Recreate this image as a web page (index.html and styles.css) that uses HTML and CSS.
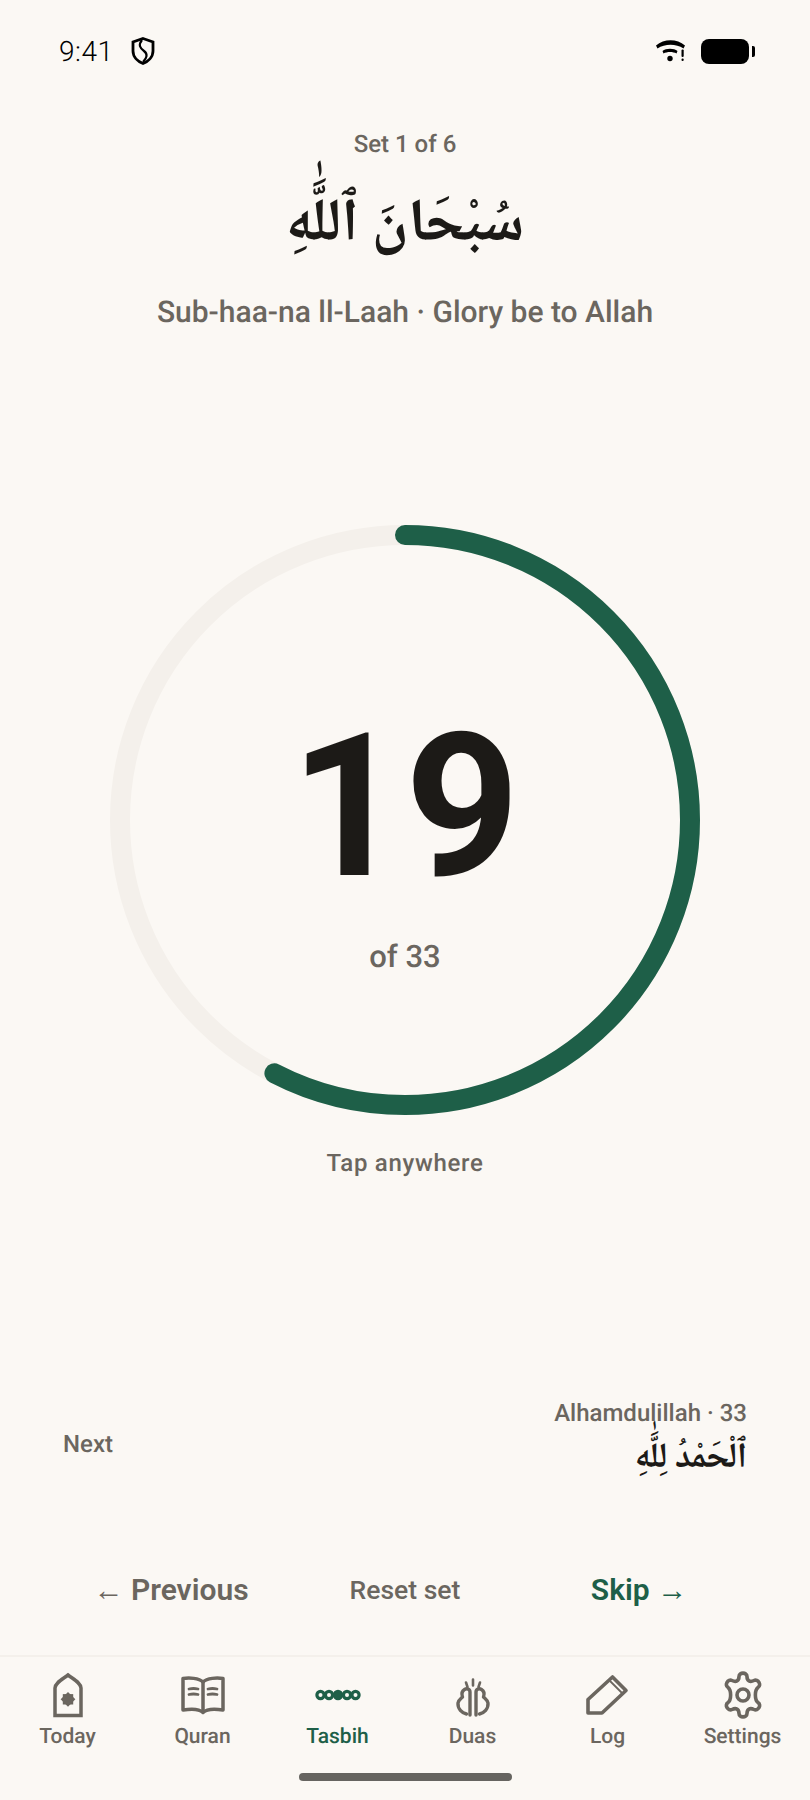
FILE: index.html
```html
<!DOCTYPE html>
<html lang="en">
<head>
    <meta charset="UTF-8">
    <meta name="viewport" content="width=device-width, initial-scale=1.0">
    <title>Tasbih</title>
    <link rel="stylesheet" href="styles.css">
</head>
<body>
    <div class="screen">
        <div class="status-bar">
            <div class="status-left">
                <span class="status-time">9:41</span>
                <svg class="status-shield" width="24" height="28" viewBox="0 0 24 28" fill="none" stroke="#000" stroke-width="2.800">
                    <path d="M12 1.500 L22 5 V14 C22 20 17 24.500 12 26.500 C7 24.500 2 20 2 14 V5 Z"/>
                    <path d="M11 3 C7 8 9 11 13 14 C17 17 16 21 12 25" stroke-width="2.200"/>
                </svg>
            </div>
            <div class="status-right">
                <svg width="30" height="22" viewBox="0 0 30 22" fill="#000">
                    <path d="M0 5.500 C8 -1.500 21 -1.500 29 5.500 L27.500 8.500 C20 3.500 9 3.500 1.500 8.500 Z"/>
                    <path d="M6.500 11 C10 8 18 8 21.500 11 L20.500 13.500 C17 11.500 11 11.500 7.500 13.500 Z"/>
                    <circle cx="14" cy="18.500" r="2.700"/>
                    <rect x="25.500" y="9.500" width="2.200" height="7.500" rx="1"/>
                    <rect x="25.500" y="18.500" width="2.200" height="2.600" rx="1"/>
                </svg>
                <div class="battery"></div>
                <div class="battery-nub"></div>
            </div>
        </div>

        <div class="dhikr-head">
            <p class="set-label">Set 1 of 6</p>
            <h1 class="arabic-main" lang="ar" dir="rtl">سُبْحَانَ ٱللَّٰهِ</h1>
            <p class="translit">Sub-haa-na ll-Laah · Glory be to Allah</p>
        </div>

        <div class="counter">
            <svg class="counter-ring" width="590" height="590" viewBox="0 0 590 590" fill="none">
                <circle cx="295" cy="295" r="285" stroke="#f4f0eb" stroke-width="20"/>
                <!-- 19 of 33 beads, starting from twelve o'clock -->
                <circle cx="295" cy="295" r="285" stroke="#1e5f48" stroke-width="20" stroke-linecap="round"
                    pathLength="33" stroke-dasharray="19 33" transform="rotate(-90 295 295)"/>
            </svg>
            <div class="counter-text">
                <div class="count">19</div>
                <div class="count-of">of 33</div>
            </div>
        </div>

        <p class="tap-hint">Tap anywhere</p>

        <div class="next-row">
            <span class="next-label">Next</span>
            <div class="next-info">
                <span class="next-name">Alhamdulillah · 33</span>
                <span class="arabic-next" lang="ar" dir="rtl">ٱلْحَمْدُ لِلَّٰهِ</span>
            </div>
        </div>

        <div class="actions">
            <button class="action action-prev"><span class="arrow">←</span> Previous</button>
            <button class="action action-reset">Reset set</button>
            <button class="action action-skip">Skip <span class="arrow">→</span></button>
        </div>

        <nav class="tabbar">
            <a class="tab">
                <svg width="48" height="48" viewBox="0 0 48 48" fill="none" stroke="currentColor" stroke-width="3.500">
                    <path d="M11 44.500 V17 C11 12 18 8.500 24 4 C30 8.500 37 12 37 17 V44.500 Z"/>
                    <g fill="currentColor" stroke="none">
                        <rect x="18.800" y="23.100" width="10.400" height="10.400"/>
                        <rect x="18.800" y="23.100" width="10.400" height="10.400" transform="rotate(45 24 28.300)"/>
                    </g>
                </svg>
                <span>Today</span>
            </a>
            <a class="tab">
                <svg width="48" height="48" viewBox="0 0 48 48" fill="none" stroke="currentColor" stroke-width="3.500" stroke-linecap="round" stroke-linejoin="round">
                    <path d="M24 11 C20 7 10 6.500 4 7.500 V39 C10 38 20 37.500 24 41.500 C28 37.500 38 38 44 39 V7.500 C38 6.500 28 7 24 11 Z"/>
                    <path d="M24 11 V39"/>
                    <path d="M10 18 C13 17.300 16 17.300 19 18 M10 23.500 C13 22.800 16 22.800 19 23.500 M29 18 C32 17.300 35 17.300 38 18 M29 23.500 C32 22.800 35 22.800 38 23.500" stroke-width="2.800"/>
                </svg>
                <span>Quran</span>
            </a>
            <a class="tab tab-active">
                <svg width="48" height="48" viewBox="0 0 48 48" fill="none" stroke="currentColor" stroke-width="3.200">
                    <circle cx="6.500" cy="24" r="3.600"/>
                    <circle cx="15" cy="24" r="3.600"/>
                    <circle cx="24" cy="24" r="5.200" fill="currentColor" stroke="none"/>
                    <circle cx="33" cy="24" r="3.600"/>
                    <circle cx="41.500" cy="24" r="3.600"/>
                </svg>
                <span>Tasbih</span>
            </a>
            <a class="tab">
                <svg width="48" height="48" viewBox="0 0 48 48" fill="none" stroke="currentColor" stroke-width="3.400" stroke-linecap="round" stroke-linejoin="round">
                    <path d="M17.500 43 C13 42 8.500 38 9 32 C9.500 29 11.500 28 13.500 26 C12.500 23 13 20 15.500 18.500 C18 17 21 18 21 21 V44"/>
                    <path d="M30.500 43 C35 42 39.500 38 39 32 C38.500 29 36.500 28 34.500 26 C35.500 23 35 20 32.500 18.500 C30 17 27 18 27 21 V44"/>
                    <path d="M24 8.500 V14.500 M17 11.500 L18.500 16 M31 11.500 L29.500 16" stroke-width="2.600"/>
                </svg>
                <span>Duas</span>
            </a>
            <a class="tab">
                <svg width="48" height="48" viewBox="0 0 48 48" fill="none" stroke="currentColor" stroke-width="3.600" stroke-linejoin="round">
                    <path d="M28.500 6 L42 19.500 L18 42 H4 V28.500 Z"/>
                    <path d="M26 10 L38 22" stroke-width="1.800"/>
                </svg>
                <span>Log</span>
            </a>
            <a class="tab">
                <svg width="48" height="48" viewBox="0 0 48 48" fill="none" stroke="currentColor" stroke-width="3.600" stroke-linejoin="round">
                    <path d="M20 5.500 C20 1 28 1 28 5.500 C28 10 31 11.500 35 9.500 C39 7.500 43 14 39 16.500 C35.500 19 35.500 29 39 31.500 C43 34 39 40.500 35 38.500 C31 36.500 28 38 28 42.500 C28 47 20 47 20 42.500 C20 38 17 36.500 13 38.500 C9 40.500 5 34 9 31.500 C12.500 29 12.500 19 9 16.500 C5 14 9 7.500 13 9.500 C17 11.500 20 10 20 5.500 Z"/>
                    <circle cx="24" cy="24" r="6"/>
                </svg>
                <span>Settings</span>
            </a>
        </nav>
        <div class="home-bar"></div>
    </div>
</body>
</html>
```

FILE: styles.css
```css
body {
    margin: 0;
    background: #fbf8f4;
    font-family: 'Roboto', sans-serif;
    color: #1c1a17;
    text-rendering: geometricPrecision;
}

p, h1 {
    margin: 0;
}

.screen {
    width: 810px;
    height: 1800px;
    display: flex;
    flex-direction: column;
    overflow: hidden;
}

.status-bar {
    height: 102px;
    padding: 0 55px 0 59px;
    display: flex;
    align-items: center;
    justify-content: space-between;
    color: #000;
}

.status-left,
.status-right {
    display: flex;
    align-items: center;
}

.status-time {
    font-size: 28px;
    font-weight: 300;
    letter-spacing: 0.5px;
    margin-right: 18px;
}

.status-right svg {
    margin-right: 15px;
}

.battery {
    width: 48px;
    height: 25px;
    background: #000;
    border-radius: 8px;
}

.battery-nub {
    width: 3px;
    height: 11px;
    margin-left: 3px;
    background: #000;
    border-radius: 0 2px 2px 0;
}

.dhikr-head {
    text-align: center;
}

.set-label {
    margin-top: 28px;
    font-size: 24px;
    line-height: 28px;
    font-weight: 500;
    color: #6b665f;
}

.arabic-main {
    margin-top: 26px;
    font-family: 'Noto Naskh Arabic', 'Noto Sans Arabic', 'DejaVu Sans', sans-serif;
    font-size: 60px;
    line-height: 88px;
    font-weight: 700;
}

.translit {
    margin-top: 23px;
    font-size: 30px;
    font-weight: 500;
    line-height: 36px;
    color: #6b665f;
}

.counter {
    position: relative;
    width: 590px;
    height: 590px;
    margin: 194px auto 0;
}

.counter-ring {
    display: block;
}

.counter-text {
    position: absolute;
    inset: 0;
    text-align: center;
}

.count {
    margin-top: 165px;
    font-size: 200px;
    line-height: 234px;
    font-weight: 700;
}

.count-of {
    margin-top: 15px;
    font-size: 31px;
    font-weight: 500;
    line-height: 36px;
    color: #6b665f;
}

.tap-hint {
    margin-top: 33px;
    text-align: center;
    font-size: 24px;
    line-height: 30px;
    font-weight: 500;
    letter-spacing: 0.7px;
    color: #6b665f;
}

.next-row {
    margin-top: 220px;
    padding: 0 63px;
    display: flex;
    align-items: center;
    justify-content: space-between;
}

.next-label,
.next-name {
    font-size: 24px;
    font-weight: 500;
    color: #6b665f;
}

.next-info {
    display: flex;
    flex-direction: column;
    align-items: flex-end;
    padding-bottom: 4px;
}

.next-name {
    line-height: 30px;
}

.arabic-next {
    margin-top: 8px;
    font-family: 'Noto Naskh Arabic', 'Noto Sans Arabic', 'DejaVu Sans', sans-serif;
    font-size: 35px;
    line-height: 50px;
    font-weight: 700;
}

.actions {
    margin-top: 82px;
    padding: 0 54px;
    display: grid;
    grid-template-columns: repeat(3, 1fr);
    align-items: center;
}

.action {
    border: none;
    background: none;
    padding: 0;
    font-family: inherit;
    font-weight: 600;
    color: #6b665f;
}

.action-prev,
.action-skip {
    font-size: 30px;
}

.action-reset {
    font-size: 26.500px;
    font-weight: 500;
}

.action-skip {
    color: #1e5f48;
}

.tabbar {
    margin-top: auto;
    padding-top: 14px;
    border-top: 2px solid #f4f0eb;
    display: grid;
    grid-template-columns: repeat(6, 1fr);
}

.tab {
    display: flex;
    flex-direction: column;
    align-items: center;
    gap: 3px;
    font-size: 21px;
    font-weight: 500;
    line-height: 30px;
    color: #6b665f;
}

.tab-active {
    color: #1e5f48;
}

.home-bar {
    width: 213px;
    height: 8px;
    margin: 21px auto 19px;
    border-radius: 4px;
    background: #666460;
}
```
